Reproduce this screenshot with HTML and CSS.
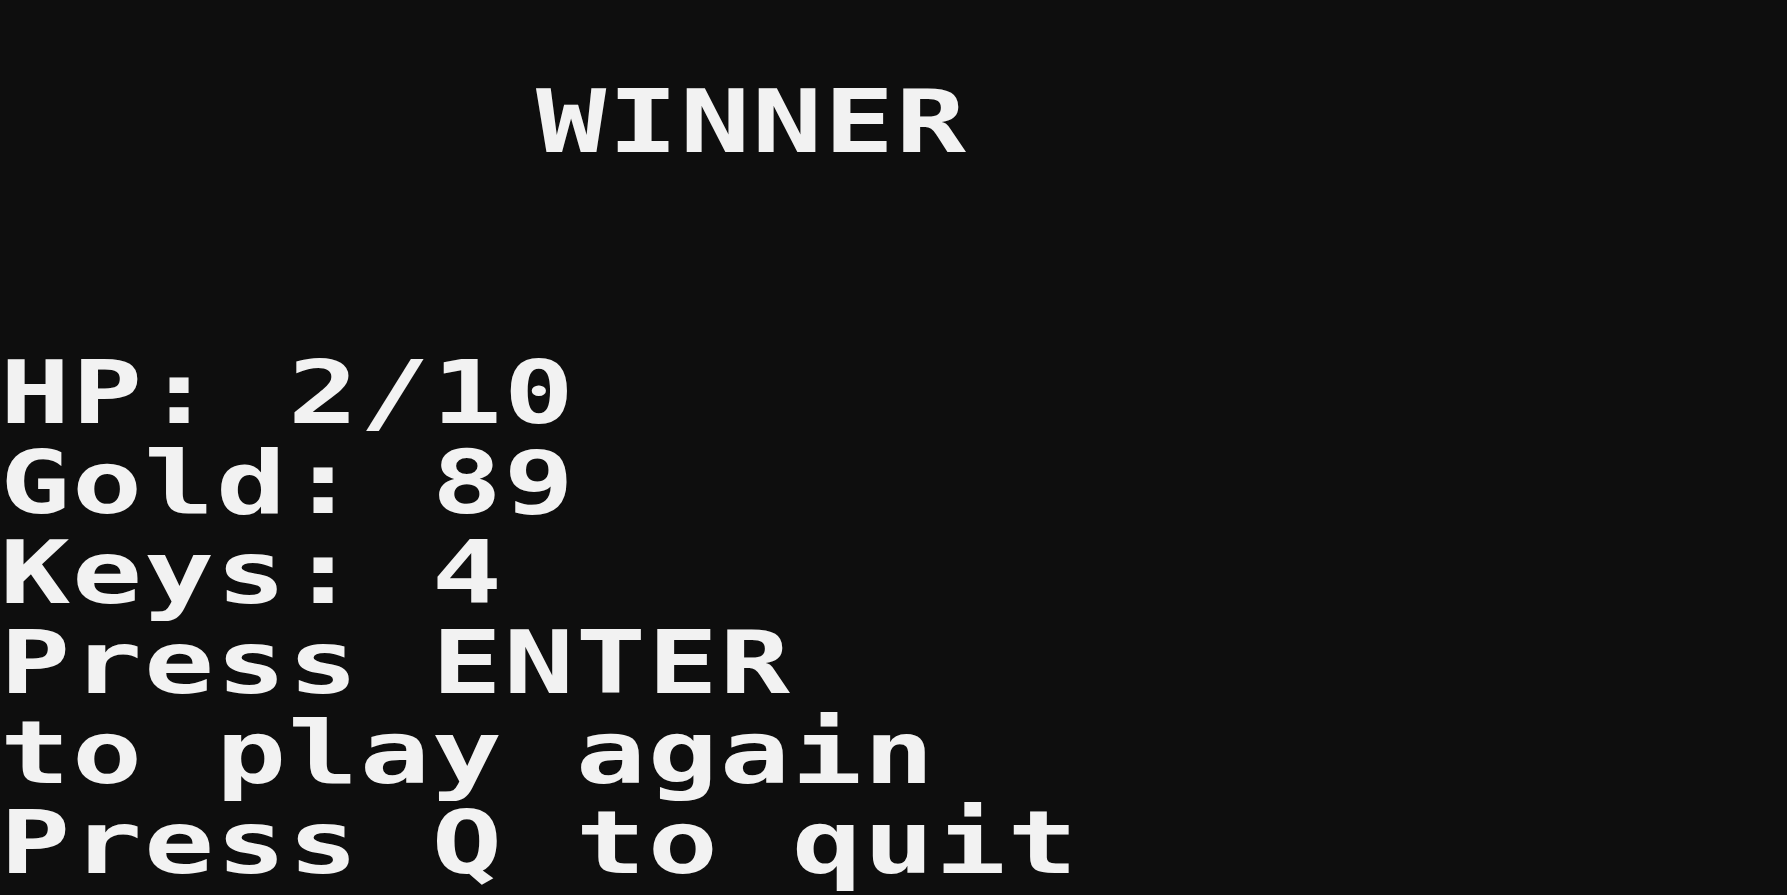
FILE: index.html
```html
<!DOCTYPE html>
<html lang="en">
<head>
<meta charset="utf-8">
<title>Winner</title>
<link rel="stylesheet" href="styles.css">
</head>
<body>
<main class="screen">
  <h1 class="title"><span class="txt">WINNER</span></h1>
  <section class="stats">
    <p class="line"><span class="txt">HP: 2/10</span></p>
    <p class="line"><span class="txt">Gold: 89</span></p>
    <p class="line"><span class="txt">Keys: 4</span></p>
    <p class="line"><span class="txt">Press ENTER</span></p>
    <p class="line"><span class="txt">to play again</span></p>
    <p class="line"><span class="txt">Press Q to quit</span></p>
  </section>
</main>
</body>
</html>
```

FILE: styles.css
```css
html, body {
  margin: 0;
  padding: 0;
  background: #0e0e0e;
  height: 100%;
  overflow: hidden;
}

.screen {
  padding-top: 77px;
  font-family: "DejaVu Sans Mono", "Liberation Mono", monospace;
  font-weight: bold;
  font-size: 86.4px;
  line-height: 90px;
  letter-spacing: 1.3px;
  color: #f2f2f2;
}

.title {
  margin: 0;
  padding-left: 536px;
  font: inherit;
  letter-spacing: inherit;
  white-space: pre;
}

.stats {
  margin-top: 181px;
}

.line {
  margin: 0;
  white-space: pre;
  height: 90px;
}

.txt {
  display: inline-block;
  white-space: pre;
  transform: scaleX(1.35);
  transform-origin: left center;
}
```
